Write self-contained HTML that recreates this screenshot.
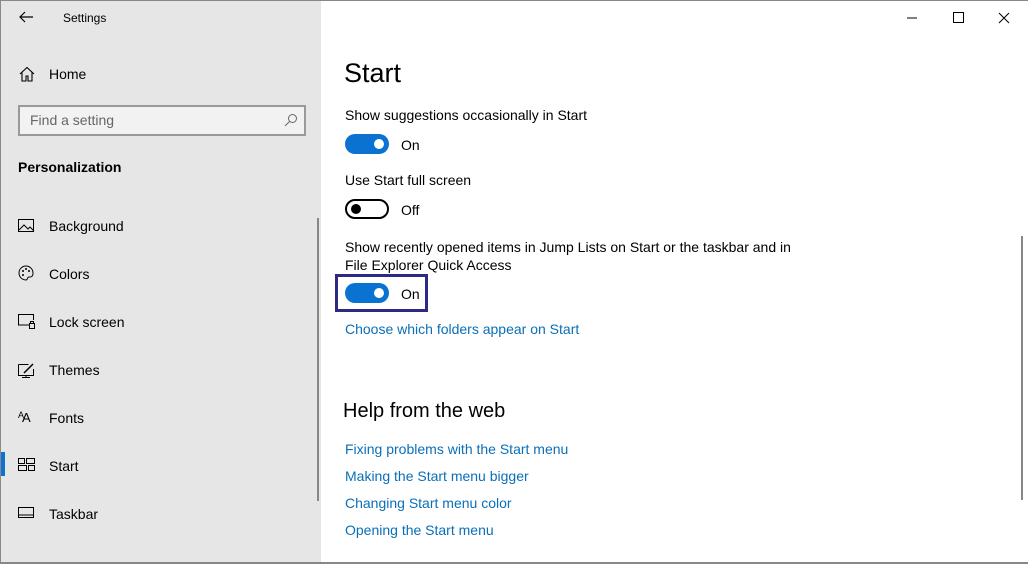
<!DOCTYPE html>
<html><head><meta charset="utf-8"><style>
*{margin:0;padding:0;box-sizing:border-box}
body{width:1028px;height:564px;overflow:hidden;background:#fff;font-family:"Liberation Sans",sans-serif;position:relative;color:#000}
.side{position:absolute;left:0;top:0;width:321px;height:564px;background:#e6e6e6;border-left:1px solid #8a8a8a}
.abs{position:absolute}
.t{font-size:14px;color:#000;white-space:nowrap}
.nav{position:absolute;left:48px;font-size:14px}
.ic{position:absolute;left:17px}
.link{position:absolute;left:345px;font-size:14px;color:#0a6fb8;white-space:nowrap}
.tog{position:absolute;left:345px;width:44px;height:20px;border-radius:10px}
.on{background:#0a72d0}
.on::after{content:"";position:absolute;right:5px;top:5px;width:10px;height:10px;border-radius:50%;background:#fff}
.off{border:2px solid #000;background:#fff}
.off::after{content:"";position:absolute;left:4px;top:3px;width:10px;height:10px;border-radius:50%;background:#000}
</style></head><body>
<div class="side">
 <svg class="abs" style="left:17px;top:10px" width="16" height="14"><path d="M15 7H2M7 2L2 7l5 5" stroke="#000" stroke-width="1.2" fill="none"/></svg>
 <div class="t abs" style="left:62px;top:11px;font-size:12px">Settings</div>
 <svg class="abs" style="left:18px;top:66px" width="16" height="16"><path d="M1 8L8 1.5 15 8M3 6.5V15h4v-5h2v5h4V6.5" stroke="#000" stroke-width="1.1" fill="none"/></svg>
 <div class="nav" style="top:66px;font-size:14px">Home</div>
 <div class="abs" style="left:17px;top:105px;width:288px;height:31px;border:2px solid #999;background:#f2f2f2"></div>
 <div class="abs" style="left:29px;top:112px;font-size:14px;color:#666">Find a setting</div>
 <svg class="abs" style="left:283px;top:113px" width="14" height="14"><circle cx="8.5" cy="5.5" r="4" stroke="#666" fill="none"/><path d="M5.5 8.5L1 13" stroke="#666"/></svg>
 <div class="abs" style="left:17px;top:159px;font-size:14px;font-weight:bold">Personalization</div>

 <svg class="ic" style="top:219px" width="17" height="14"><rect x=".5" y=".5" width="15" height="12" fill="none" stroke="#000"/><path d="M1 11l5-5 4 4 2-2 4 4" fill="none" stroke="#000"/></svg>
 <div class="nav" style="top:218px">Background</div>
 <svg class="ic" style="top:265px" width="16" height="16"><path d="M8 1a7 7 0 1 0 0 14c2 0 1-3 3-3s4 0 4-4A7 7 0 0 0 8 1z" fill="none" stroke="#000"/><circle cx="5" cy="6" r="1" fill="#000"/><circle cx="8" cy="4" r="1" fill="#000"/><circle cx="11" cy="6" r="1" fill="#000"/><circle cx="5" cy="10" r="1" fill="#000"/></svg>
 <div class="nav" style="top:266px">Colors</div>
 <svg class="ic" style="top:314px" width="17" height="15"><path d="M11 11H.5V.5h15V6" fill="none" stroke="#000"/><rect x="11.5" y="9.5" width="5" height="5" fill="none" stroke="#000"/><path d="M12.5 9.5V7.5h3v2" fill="none" stroke="#000"/></svg>
 <div class="nav" style="top:314px">Lock screen</div>
 <svg class="ic" style="top:362px" width="17" height="16"><path d="M.5 2.5h10M15.5 7v6.5H.5v-11M8 13.5v2M4 15.5h8" fill="none" stroke="#000"/><path d="M6 11l9-9" stroke="#000" stroke-width="1.5"/></svg>
 <div class="nav" style="top:362px">Themes</div>
 <div class="ic" style="top:410px;font-size:13px;letter-spacing:-2px"><span style="font-size:9px;vertical-align:4px">A</span>A</div>
 <div class="nav" style="top:410px">Fonts</div>
 <div class="abs" style="left:0;top:452px;width:4px;height:24px;background:#0a72d0"></div>
 <svg class="ic" style="top:458px" width="17" height="14"><rect x=".5" y=".5" width="6" height="5" fill="none" stroke="#000"/><rect x="8.5" y=".5" width="8" height="5" fill="none" stroke="#000"/><rect x=".5" y="7.5" width="8" height="5" fill="none" stroke="#000"/><rect x="10.5" y="7.5" width="6" height="5" fill="none" stroke="#000"/></svg>
 <div class="nav" style="top:458px">Start</div>
 <svg class="ic" style="top:507px" width="17" height="12"><rect x=".5" y=".5" width="15" height="10" fill="none" stroke="#000"/><path d="M1 8h15" stroke="#000"/></svg>
 <div class="nav" style="top:506px">Taskbar</div>
 <div class="abs" style="left:316px;top:218px;width:2px;height:283px;background:#888"></div>
</div>
<div class="abs" style="left:0;top:562px;width:1028px;height:2px;background:#888"></div>
<div class="abs" style="left:0;top:0;width:1028px;height:1px;background:#888"></div>

<svg class="abs" style="left:906px;top:12px" width="110" height="12"><path d="M1 6h10" stroke="#000"/><rect x="47.5" y=".5" width="10" height="10" fill="none" stroke="#000"/><path d="M93 1l10 10M103 1L93 11" stroke="#000"/></svg>
<div class="abs" style="left:1021px;top:236px;width:2px;height:264px;background:#888"></div>

<div class="abs" style="left:344px;top:58px;font-size:27px">Start</div>
<div class="t abs" style="left:345px;top:107px">Show suggestions occasionally in Start</div>
<div class="tog on" style="top:134px"></div><div class="t abs" style="left:401px;top:137px">On</div>
<div class="t abs" style="left:345px;top:172px">Use Start full screen</div>
<div class="tog off" style="top:199px"></div><div class="t abs" style="left:401px;top:202px">Off</div>
<div class="t abs" style="left:345px;top:238px;line-height:18px">Show recently opened items in Jump Lists on Start or the taskbar and in<br>File Explorer Quick Access</div>
<div class="abs" style="left:335px;top:274px;width:93px;height:38px;border:3px solid #2c2a86"></div>
<div class="tog on" style="top:283px"></div><div class="t abs" style="left:401px;top:286px">On</div>
<div class="link" style="top:321px">Choose which folders appear on Start</div>
<div class="abs" style="left:343px;top:400px;font-size:20px">Help from the web</div>
<div class="link" style="top:441px">Fixing problems with the Start menu</div>
<div class="link" style="top:468px">Making the Start menu bigger</div>
<div class="link" style="top:495px">Changing Start menu color</div>
<div class="link" style="top:522px">Opening the Start menu</div>
</body></html>
